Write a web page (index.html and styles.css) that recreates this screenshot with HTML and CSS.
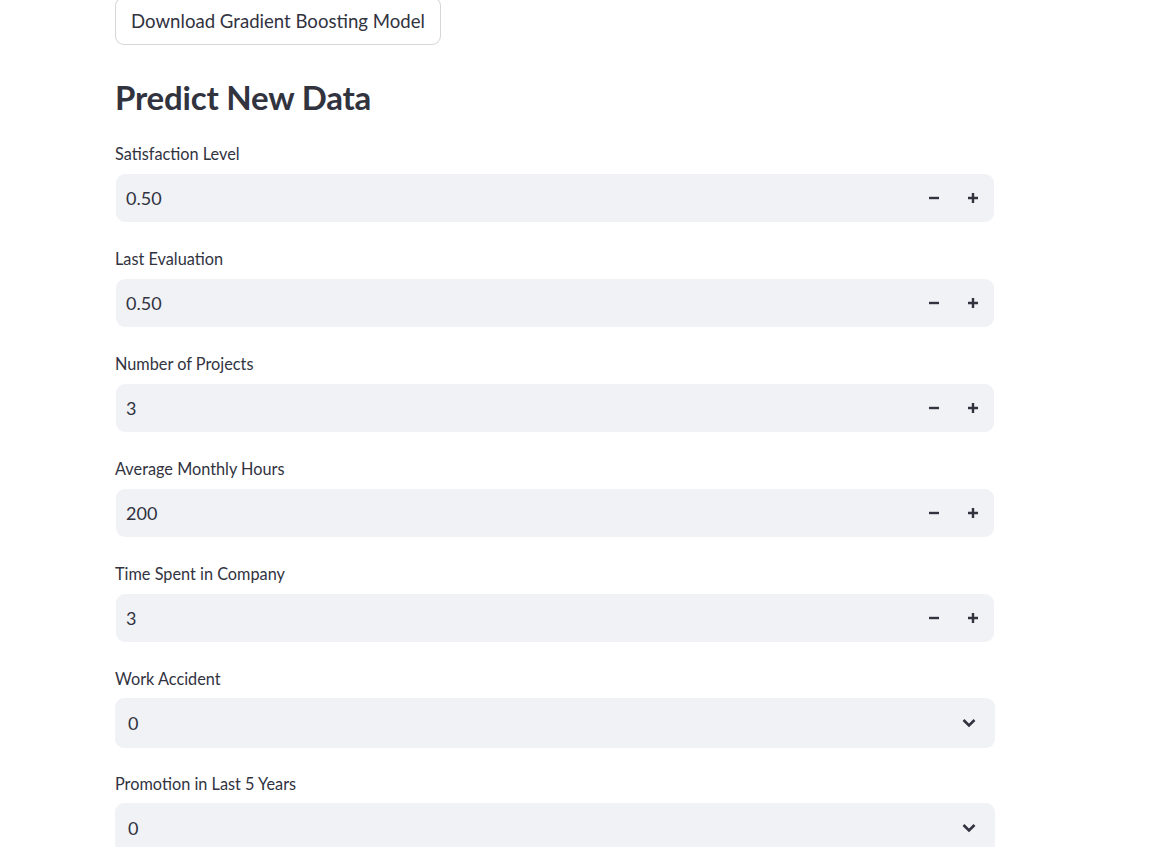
FILE: index.html
```html
<!DOCTYPE html>
<html lang="en">
<head>
<meta charset="utf-8">
<title>Predict New Data</title>
<link rel="stylesheet" href="styles.css">
</head>
<body>
<main class="block">
  <div class="download-row">
    <button class="btn">Download Gradient Boosting Model</button>
  </div>
  <h2 class="heading">Predict New Data</h2>

  <div class="field">
    <label class="label">Satisfaction Level</label>
    <div class="number">
      <span class="value">0.50</span>
      <span class="step"><svg viewBox="0 0 12 12" width="12" height="12"><path d="M1 6h10" stroke="currentColor" stroke-width="2.4"/></svg></span>
      <span class="step"><svg viewBox="0 0 12 12" width="12" height="12"><path d="M1 6h10M6 1v10" stroke="currentColor" stroke-width="2.4"/></svg></span>
    </div>
  </div>

  <div class="field">
    <label class="label">Last Evaluation</label>
    <div class="number">
      <span class="value">0.50</span>
      <span class="step"><svg viewBox="0 0 12 12" width="12" height="12"><path d="M1 6h10" stroke="currentColor" stroke-width="2.4"/></svg></span>
      <span class="step"><svg viewBox="0 0 12 12" width="12" height="12"><path d="M1 6h10M6 1v10" stroke="currentColor" stroke-width="2.4"/></svg></span>
    </div>
  </div>

  <div class="field">
    <label class="label">Number of Projects</label>
    <div class="number">
      <span class="value">3</span>
      <span class="step"><svg viewBox="0 0 12 12" width="12" height="12"><path d="M1 6h10" stroke="currentColor" stroke-width="2.4"/></svg></span>
      <span class="step"><svg viewBox="0 0 12 12" width="12" height="12"><path d="M1 6h10M6 1v10" stroke="currentColor" stroke-width="2.4"/></svg></span>
    </div>
  </div>

  <div class="field">
    <label class="label">Average Monthly Hours</label>
    <div class="number">
      <span class="value">200</span>
      <span class="step"><svg viewBox="0 0 12 12" width="12" height="12"><path d="M1 6h10" stroke="currentColor" stroke-width="2.4"/></svg></span>
      <span class="step"><svg viewBox="0 0 12 12" width="12" height="12"><path d="M1 6h10M6 1v10" stroke="currentColor" stroke-width="2.4"/></svg></span>
    </div>
  </div>

  <div class="field">
    <label class="label">Time Spent in Company</label>
    <div class="number">
      <span class="value">3</span>
      <span class="step"><svg viewBox="0 0 12 12" width="12" height="12"><path d="M1 6h10" stroke="currentColor" stroke-width="2.4"/></svg></span>
      <span class="step"><svg viewBox="0 0 12 12" width="12" height="12"><path d="M1 6h10M6 1v10" stroke="currentColor" stroke-width="2.4"/></svg></span>
    </div>
  </div>

  <div class="field">
    <label class="label">Work Accident</label>
    <div class="select">
      <span class="value">0</span>
      <span class="chev"><svg viewBox="0 0 14 10" width="14" height="10"><path d="M1.5 2l5.5 5.5L12.5 2" fill="none" stroke="currentColor" stroke-width="2.6"/></svg></span>
    </div>
  </div>

  <div class="field">
    <label class="label">Promotion in Last 5 Years</label>
    <div class="select">
      <span class="value">0</span>
      <span class="chev"><svg viewBox="0 0 14 10" width="14" height="10"><path d="M1.5 2l5.5 5.5L12.5 2" fill="none" stroke="currentColor" stroke-width="2.6"/></svg></span>
    </div>
  </div>
</main>
</body>
</html>
```

FILE: styles.css
```css
html, body {
  margin: 0;
  padding: 0;
  background: #ffffff;
  overflow: hidden;
}

body {
  font-family: "Source Sans Pro", Lato, "Noto Sans", sans-serif;
  color: rgb(49, 51, 63);
  height: 847px;
}

.block {
  width: 880px;
  margin-left: 115px;
  margin-top: -3px;
  display: flex;
  flex-direction: column;
}

.download-row {
  display: flex;
}

.btn {
  box-sizing: border-box;
  height: 48px;
  width: 326px;
  padding: 0 8px;
  background: #ffffff;
  border: 1px solid rgba(49, 51, 63, 0.2);
  border-radius: 9px;
  font-family: inherit;
  font-size: 18.6px;
  white-space: nowrap;
  color: rgb(49, 51, 63);
  display: flex;
  align-items: center;
  justify-content: center;
}

.heading {
  margin: 25px 0 0 0;
  font-size: 33px;
  font-weight: 700;
  line-height: 54px;
  letter-spacing: -0.2px;
}

.field {
  display: flex;
  flex-direction: column;
}

.label {
  font-size: 16.3px;
  line-height: 26px;
  height: 26px;
  margin-top: 24px;
  margin-bottom: 7px;
}

.heading + .field .label {
  margin-top: 17px;
}

.number {
  box-sizing: border-box;
  height: 48px;
  margin: 0 1px;
  background: rgb(240, 242, 246);
  border-radius: 9px;
  display: flex;
  align-items: center;
  padding-left: 10px;
  padding-right: 2px;
}

.value {
  flex: 1;
  font-size: 18px;
}

.step {
  width: 39px;
  height: 44px;
  display: flex;
  align-items: center;
  justify-content: center;
  color: rgb(49, 51, 63);
}

.select {
  box-sizing: border-box;
  height: 50px;
  margin-top: -1px;
  background: rgb(240, 242, 246);
  border-radius: 9px;
  display: flex;
  align-items: center;
  padding-left: 13px;
  padding-right: 19px;
}

.field:last-child .label {
  margin-top: 23px;
}

.chev {
  display: flex;
  align-items: center;
  color: rgb(49, 51, 63);
}
```
